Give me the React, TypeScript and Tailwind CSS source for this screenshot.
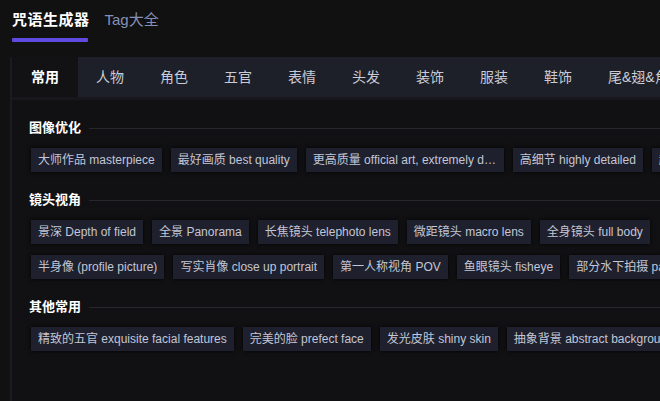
import React from "react";

const font = { fontFamily: '"Liberation Sans", "Noto Sans CJK SC", sans-serif' };

const tabs = ["人物", "角色", "五官", "表情", "头发", "装饰", "服装", "鞋饰", "尾&翅&角"];

type Row = { label: string; max?: boolean }[];

const sections: { title: string; rows: Row[] }[] = [
  {
    title: "图像优化",
    rows: [
      [
        { label: "大师作品 masterpiece" },
        { label: "最好画质 best quality" },
        { label: "更高质量 official art, extremely detailed", max: true },
        { label: "高细节 highly detailed" },
        { label: "超高分辨率 8k wallpaper" },
      ],
    ],
  },
  {
    title: "镜头视角",
    rows: [
      [
        { label: "景深 Depth of field" },
        { label: "全景 Panorama" },
        { label: "长焦镜头 telephoto lens" },
        { label: "微距镜头 macro lens" },
        { label: "全身镜头 full body" },
      ],
      [
        { label: "半身像 (profile picture)" },
        { label: "写实肖像 close up portrait" },
        { label: "第一人称视角 POV" },
        { label: "鱼眼镜头 fisheye" },
        { label: "部分水下拍摄 partially underwater shot" },
      ],
    ],
  },
  {
    title: "其他常用",
    rows: [
      [
        { label: "精致的五官 exquisite facial features" },
        { label: "完美的脸 prefect face" },
        { label: "发光皮肤 shiny skin" },
        { label: "抽象背景 abstract background" },
      ],
    ],
  },
];

function Tag({ label, max }: { label: string; max?: boolean }) {
  return (
    <div
      className={
        "shrink-0 h-[24px] px-[7px] flex items-center bg-[#1e202e] text-[#c3c6d4] text-[12px] whitespace-nowrap shadow-[0_0_4px_rgba(0,0,0,0.9)] " +
        (max ? "max-w-[198px]" : "")
      }
    >
      <span className={max ? "overflow-hidden text-ellipsis" : ""}>{label}</span>
    </div>
  );
}

export default function App() {
  return (
    <div className="w-[660px] h-[401px] bg-[#111111] overflow-hidden" style={font}>
      <div className="flex items-start pl-[12px] pt-[9px] h-[57px]">
        <div className="flex flex-col">
          <div className="text-[15px] font-bold text-white leading-[22px] tracking-[0.5px]">咒语生成器</div>
          <div className="mt-[7px] h-[4px] w-[76px] rounded-[1px] bg-[#5f4ae0]"></div>
        </div>
        <div className="ml-[15px] text-[15px] text-[#8590b8] leading-[22px]">Tag大全</div>
      </div>
      <div className="ml-[10px] border-l-[2px] border-[#1c1c20] h-[344px] bg-[#111113]">
        <div className="flex h-[40px]">
          <div className="w-[66px] shrink-0 flex items-center justify-center bg-[#121215] rounded-tl-[6px] text-white font-bold text-[14px]">
            常用
          </div>
          <div className="flex flex-1 bg-[#1d1f29] overflow-hidden">
            {tabs.map((t) => (
              <div key={t} className="shrink-0 px-[18px] flex items-center justify-center text-[#c9ccd6] text-[14px] whitespace-nowrap">
                {t}
              </div>
            ))}
          </div>
        </div>
        <div className="h-[3px] bg-[#17171d]"></div>
        <div className="pl-[17px] pt-[19px] flex flex-col">
          {sections.map((s, si) => (
            <div key={s.title} className={si > 0 ? "mt-[19px]" : ""}>
              <div className="flex items-center h-[18px]">
                <div className="text-[13px] font-bold text-white leading-[18px] whitespace-nowrap">{s.title}</div>
                <div className="flex-1 ml-[8px] h-[1px] bg-[#27272c]"></div>
              </div>
              <div className="flex flex-col gap-[11px] mt-[11px] pl-[2px]">
                {s.rows.map((r, ri) => (
                  <div key={ri} className="flex gap-[9px]">
                    {r.map((t) => (
                      <Tag key={t.label} label={t.label} max={t.max} />
                    ))}
                  </div>
                ))}
              </div>
            </div>
          ))}
        </div>
      </div>
    </div>
  );
}
